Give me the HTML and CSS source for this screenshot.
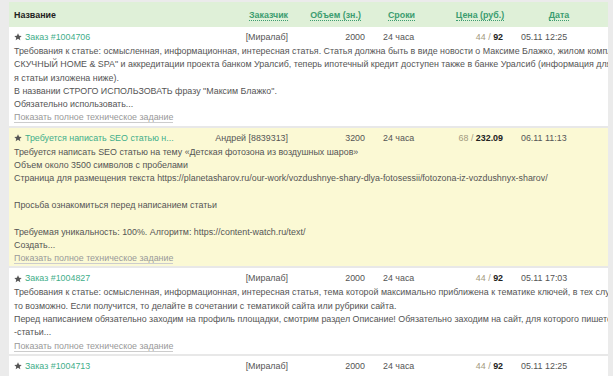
FILE: index.html
```html
<!DOCTYPE html>
<html lang="ru">
<head>
    <meta charset="UTF-8">
    <title>Заказы</title>
    <link rel="stylesheet" href="styles.css">
</head>
<body>
    <div class="orders">
        <div class="orders-head">
            <div class="th th-name">Название</div>
            <div class="th"><a href="#">Заказчик</a></div>
            <div class="th"><a href="#">Объем (зн.)</a></div>
            <div class="th"><a href="#">Сроки</a></div>
            <div class="th"><a href="#">Цена (руб.)</a></div>
            <div class="th"><a href="#">Дата</a></div>
        </div>

        <div class="order">
            <div class="order-top">
                <div class="cell name"><svg class="star" viewBox="0 0 10 10"><path d="M5 0.4l1.4 3 3.2 0.3-2.4 2.1 0.7 3.2L5 7.3 2.1 9l0.7-3.2L0.4 3.7l3.2-0.3z"/></svg><a href="#">Заказ #1004706</a></div>
                <div class="cell customer">[Миралаб]</div>
                <div class="cell volume">2000</div>
                <div class="cell terms">24 часа</div>
                <div class="cell price"><span class="price-min">44 /</span> <b>92</b></div>
                <div class="cell date">05.11 12:25</div>
            </div>
            <div class="order-desc">
                Требования к статье: осмысленная, информационная, интересная статья. Статья должна быть в виде новости о Максиме Блажко, жилом комплексе "НЕ<br>
                СКУЧНЫЙ HOME &amp; SPA" и аккредитации проекта банком Уралсиб, теперь ипотечный кредит доступен также в банке Уралсиб (информация для написани<br>
                я статьи изложена ниже).<br>
                В названии СТРОГО ИСПОЛЬЗОВАТЬ фразу "Максим Блажко".<br>
                Обязательно использовать...<br>
                <a class="more" href="#">Показать полное техническое задание</a>
            </div>
        </div>

        <div class="order order-marked">
            <div class="order-top">
                <div class="cell name"><svg class="star" viewBox="0 0 10 10"><path d="M5 0.4l1.4 3 3.2 0.3-2.4 2.1 0.7 3.2L5 7.3 2.1 9l0.7-3.2L0.4 3.7l3.2-0.3z"/></svg><a href="#">Требуется написать SEO статью н...</a></div>
                <div class="cell customer">Андрей [8839313]</div>
                <div class="cell volume">3200</div>
                <div class="cell terms">24 часа</div>
                <div class="cell price"><span class="price-min">68 /</span> <b>232.09</b></div>
                <div class="cell date">06.11 11:13</div>
            </div>
            <div class="order-desc">
                Требуется написать SEO статью на тему «Детская фотозона из воздушных шаров»<br>
                Объем около 3500 символов с пробелами<br>
                Страница для размещения текста https://planetasharov.ru/our-work/vozdushnye-shary-dlya-fotosessii/fotozona-iz-vozdushnyx-sharov/<br>
                <br>
                Просьба ознакомиться перед написанием статьи<br>
                <br>
                Требуемая уникальность: 100%. Алгоритм: https://content-watch.ru/text/<br>
                Создать...<br>
                <a class="more" href="#">Показать полное техническое задание</a>
            </div>
        </div>

        <div class="order">
            <div class="order-top">
                <div class="cell name"><svg class="star" viewBox="0 0 10 10"><path d="M5 0.4l1.4 3 3.2 0.3-2.4 2.1 0.7 3.2L5 7.3 2.1 9l0.7-3.2L0.4 3.7l3.2-0.3z"/></svg><a href="#">Заказ #1004827</a></div>
                <div class="cell customer">[Миралаб]</div>
                <div class="cell volume">2000</div>
                <div class="cell terms">24 часа</div>
                <div class="cell price"><span class="price-min">44 /</span> <b>92</b></div>
                <div class="cell date">05.11 17:03</div>
            </div>
            <div class="order-desc">
                Требования к статье: осмысленная, информационная, интересная статья, тема которой максимально приближена к тематике ключей, в тех случаях, когда<br>
                то возможно. Если получится, то делайте в сочетании с тематикой сайта или рубрики сайта.<br>
                Перед написанием обязательно заходим на профиль площадки, смотрим раздел Описание! Обязательно заходим на сайт, для которого пишется<br>
                -статьи...<br>
                <a class="more" href="#">Показать полное техническое задание</a>
            </div>
        </div>

        <div class="order">
            <div class="order-top">
                <div class="cell name"><svg class="star" viewBox="0 0 10 10"><path d="M5 0.4l1.4 3 3.2 0.3-2.4 2.1 0.7 3.2L5 7.3 2.1 9l0.7-3.2L0.4 3.7l3.2-0.3z"/></svg><a href="#">Заказ #1004713</a></div>
                <div class="cell customer">[Миралаб]</div>
                <div class="cell volume">2000</div>
                <div class="cell terms">24 часа</div>
                <div class="cell price"><span class="price-min">44 /</span> <b>92</b></div>
                <div class="cell date">05.11 12:25</div>
            </div>
            <div class="order-desc">
                Требования к статье: осмысленная, информационная, интересная статья. Статья должна быть в виде новости о Максиме Блажко, жилом комплексе "НЕ<br>
                СКУЧНЫЙ HOME &amp; SPA" и аккредитации проекта банком Уралсиб
            </div>
        </div>
    </div>
</body>
</html>
```

FILE: styles.css
```css
body {
    margin: 0;
    padding: 2px 5px 0 9px;
    background-color: #ebebeb;
    font-family: "Liberation Sans", Arial, sans-serif;
    font-size: 8.9px;
    color: #555;
    height: 374px;
    overflow: hidden;
}
a {
    text-decoration: none;
}
.orders {
    background-color: #fff;
    overflow: hidden;
    height: 374px;
}
.orders-head {
    display: grid;
    grid-template-columns: 226px 67px 67px 65px 92px 66px;
    align-items: center;
    height: 25px;
    padding-top: 1px;
    box-sizing: border-box;
    background-color: #dff0d8;
    font-weight: bold;
}
.th {
    text-align: center;
}
.th a {
    color: #3c9d70;
    border-bottom: 1px dotted #3c9d70;
}
.th-name {
    text-align: left;
    padding-left: 5px;
    color: #222;
}
.order {
    border-bottom: 2px solid #e8e8e8;
    padding: 3px 0 1px;
    line-height: 13.3px;
}
.order-marked {
    background-color: #fbf9d4;
}
.order-top {
    display: grid;
    grid-template-columns: 189px 95px 77px 78px 60px 1fr;
    height: 15px;
    align-items: center;
}
.cell {
    white-space: nowrap;
}
.name {
    padding-left: 5px;
    display: flex;
    align-items: center;
}
.name a {
    color: #3fae8a;
}
.star {
    width: 8px;
    height: 8px;
    fill: #555;
    margin-right: 3px;
}
.customer,
.volume,
.price {
    text-align: right;
    padding-right: 5px;
}
.terms,
.date {
    padding-left: 13px;
}
.price-min {
    color: #a39a80;
}
.price b {
    color: #222;
}
.order-desc {
    padding-left: 5px;
    white-space: nowrap;
}
.more {
    color: #999;
    border-bottom: 1px solid #ccc;
}
```
